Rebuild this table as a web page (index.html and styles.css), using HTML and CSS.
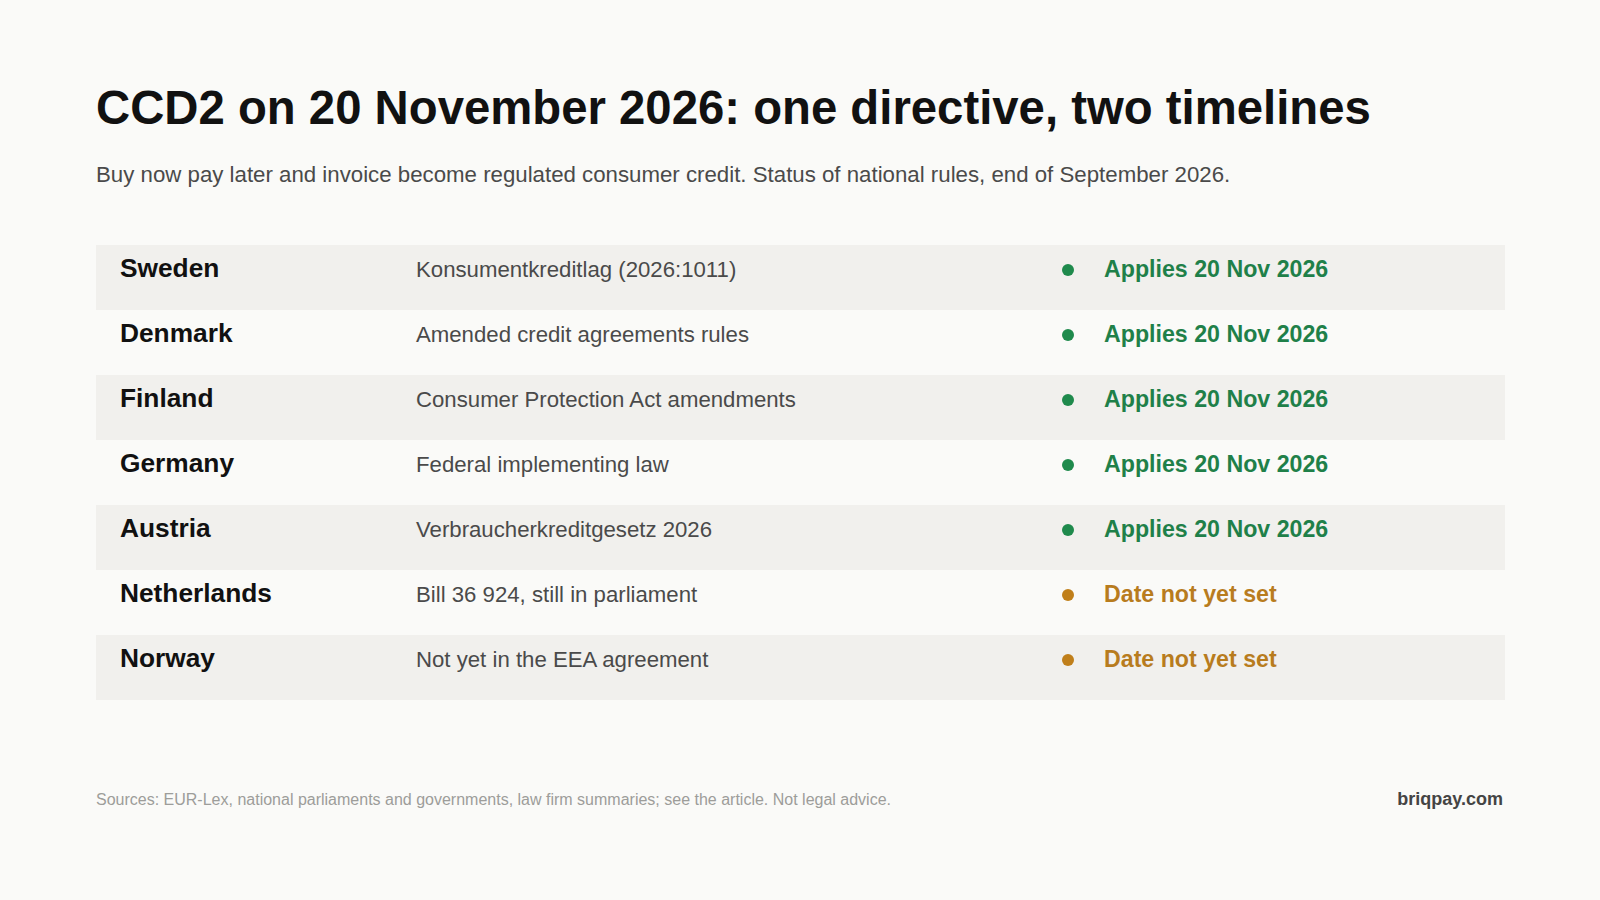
FILE: index.html
```html
<!DOCTYPE html>
<html lang="en">
<head>
<meta charset="utf-8">
<title>CCD2 on 20 November 2026</title>
<link rel="stylesheet" href="styles.css">
</head>
<body>
<main class="page">
  <header class="head">
    <h1 class="title">CCD2 on 20 November 2026: one directive, two timelines</h1>
    <p class="subtitle">Buy now pay later and invoice become regulated consumer credit. Status of national rules, end of September 2026.</p>
  </header>
  <section class="table">
    <div class="row alt">
      <div class="country">Sweden</div>
      <div class="law">Konsumentkreditlag (2026:1011)</div>
      <div class="status ok"><span class="dot"></span>Applies 20 Nov 2026</div>
    </div>
    <div class="row">
      <div class="country">Denmark</div>
      <div class="law">Amended credit agreements rules</div>
      <div class="status ok"><span class="dot"></span>Applies 20 Nov 2026</div>
    </div>
    <div class="row alt">
      <div class="country">Finland</div>
      <div class="law">Consumer Protection Act amendments</div>
      <div class="status ok"><span class="dot"></span>Applies 20 Nov 2026</div>
    </div>
    <div class="row">
      <div class="country">Germany</div>
      <div class="law">Federal implementing law</div>
      <div class="status ok"><span class="dot"></span>Applies 20 Nov 2026</div>
    </div>
    <div class="row alt">
      <div class="country">Austria</div>
      <div class="law">Verbraucherkreditgesetz 2026</div>
      <div class="status ok"><span class="dot"></span>Applies 20 Nov 2026</div>
    </div>
    <div class="row">
      <div class="country">Netherlands</div>
      <div class="law">Bill 36 924, still in parliament</div>
      <div class="status pending"><span class="dot"></span>Date not yet set</div>
    </div>
    <div class="row alt">
      <div class="country">Norway</div>
      <div class="law">Not yet in the EEA agreement</div>
      <div class="status pending"><span class="dot"></span>Date not yet set</div>
    </div>
  </section>
  <footer class="foot">
    <p class="sources">Sources: EUR-Lex, national parliaments and governments, law firm summaries; see the article. Not legal advice.</p>
    <p class="brand">briqpay.com</p>
  </footer>
</main>
</body>
</html>
```
FILE: styles.css
```css
* { box-sizing: border-box; }
html, body {
  margin: 0;
  padding: 0;
  background: #fafaf8;
  font-family: "Liberation Sans", Arial, sans-serif;
  color: #111;
}
.page {
  width: 1600px;
  height: 900px;
  padding: 0 95px 0 96px;
  display: flex;
  flex-direction: column;
}
.head {
  padding-top: 80px;
}
.title {
  margin: 0;
  font-size: 47.3px;
  line-height: 56px;
  font-weight: 700;
  color: #111;
}
.subtitle {
  margin: 26px 0 0;
  font-size: 22.25px;
  line-height: 26px;
  color: #4a4a4a;
}
.table {
  margin-top: 57px;
  display: flex;
  flex-direction: column;
}
.row {
  height: 65px;
  padding: 8px 24px 0;
  display: grid;
  grid-template-columns: 296px 1fr 420px;
  align-items: baseline;
}
.row.alt {
  background: #f1f0ed;
}
.country {
  font-size: 26.3px;
  line-height: 31px;
  font-weight: 700;
  color: #111;
}
.law {
  font-size: 22.2px;
  line-height: 26px;
  color: #4a4a4a;
}
.status {
  display: flex;
  align-items: baseline;
  font-size: 23.2px;
  line-height: 26px;
  font-weight: 700;
}
.dot {
  width: 12px;
  height: 12px;
  border-radius: 50%;
  margin: 2px 30px 0 1px;
  flex: none;
  align-self: center;
}
.ok { color: #1f8049; }
.ok .dot { background: #1f8a4c; }
.pending { color: #b87c1e; }
.pending .dot { background: #c07f1a; }
.foot {
  margin-top: auto;
  margin-bottom: 90px;
  display: flex;
  justify-content: space-between;
  align-items: baseline;
}
.sources {
  margin: 0;
  font-size: 16px;
  color: #9d9d9a;
}
.brand {
  margin: 0 2px 0 0;
  font-size: 18px;
  font-weight: 700;
  color: #444;
}
```
